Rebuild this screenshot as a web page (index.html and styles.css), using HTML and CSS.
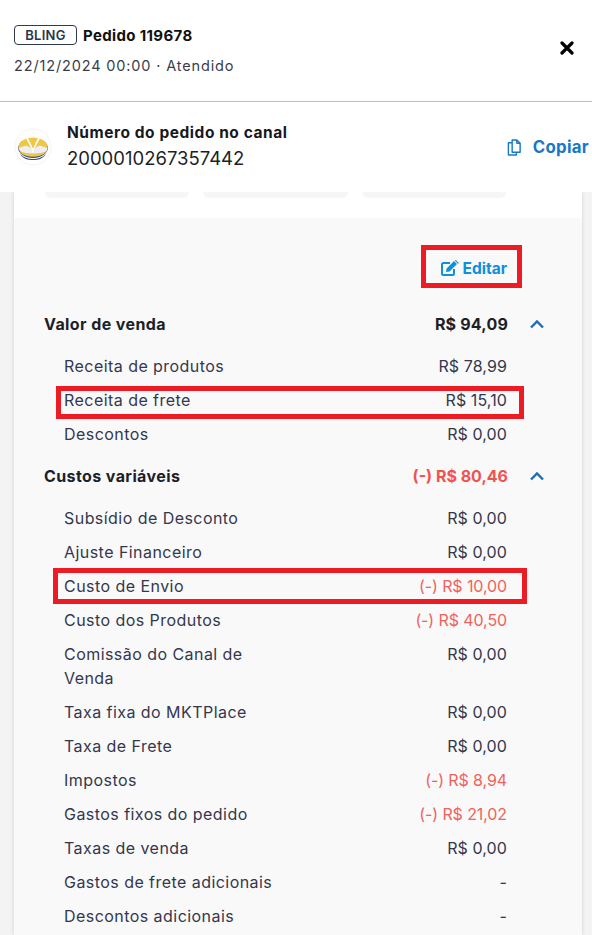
FILE: index.html
```
<!DOCTYPE html>
<html lang="pt-BR">
<head>
<meta charset="utf-8">
<title>Pedido 119678</title>
<link rel="stylesheet" href="styles.css">
</head>
<body>
<div class="drawer">
  <header class="head">
    <div class="head-text">
      <div class="title-line"><span class="badge">BLING</span><span class="title">Pedido 119678</span></div>
      <div class="subtitle">22/12/2024 00:00 · Atendido</div>
    </div>
    <svg class="close" viewBox="0 0 14 14" width="14" height="14"><path d="M2 2L12 12M12 2L2 12" stroke="#000" stroke-width="3.2" stroke-linecap="round" fill="none"/></svg>
  </header>
  <section class="channel">
    <svg class="logo" viewBox="0 0 38 38" width="38" height="38">
      <circle cx="19" cy="19" r="18" fill="#fff" stroke="#f3f3f3"/>
      <ellipse cx="19" cy="20" rx="14.800" ry="10" fill="#3b4a78"/>
      <ellipse cx="19" cy="19" rx="14.500" ry="9.600" fill="#eec844"/>
      <path d="M4.500 20l8-2.500 3.500 2 3 4.500 3-4.500 3.500-2 8 2.500-1 3.500c-6 2.500-20 2.500-26 0z" fill="#eceef3"/>
      <path d="M5.500 23c5 4.500 22 4.500 27 0c-1 3.500-7 5.500-13.500 5.500S6.500 26.500 5.500 23z" fill="#eec844"/>
      <path d="M13 10l3.500 7 2.500 6 2.500-6 3.500-7" fill="none" stroke="#fff" stroke-width="1.700"/>
      <path d="M6 26c4 4 9 5 13 5s9-1 13-5c-3 5-8 6-13 6s-10-1-13-6z" fill="#3b4a78"/>
    </svg>
    <div class="channel-text">
      <div class="channel-label">Número do pedido no canal</div>
      <div class="channel-number">2000010267357442</div>
    </div>
    <div class="copy">
      <svg viewBox="0 0 16 18" width="15" height="17" fill="none" stroke="#1877c9" stroke-width="1.500"><path d="M5.500 1h5l3.500 3.500V14H5.500z" stroke-linejoin="round"/><path d="M10.500 1v3.500H14" stroke-linejoin="round"/><path d="M5.500 4H1.500v13H10v-3" stroke-linejoin="round"/></svg>
      <span>Copiar</span>
    </div>
  </section>
  <div class="sheet">
    <div class="tabs"><span class="tab"></span><span class="tab"></span><span class="tab"></span></div>
    <div class="card">
      <div class="edit-row">
        <div class="edit">
          <svg viewBox="0 0 18 16" width="18" height="16"><path d="M13 9v4.500a1.500 1.500 0 0 1-1.500 1.500h-9A1.500 1.500 0 0 1 1 13.500v-9A1.500 1.500 0 0 1 2.500 3H9" fill="none" stroke="#0f8fdc" stroke-width="2"/><path d="M5 12l.6-3.600 7.400-7.400 3 3-7.400 7.400zM13.800.4l1-.4 3 3-.6 1z" fill="#0f8fdc"/></svg>
          <span>Editar</span>
        </div>
        <div class="mark mark-edit"></div>
      </div>

      <div class="row section"><span>Valor de venda</span><span class="val">R$ 94,09</span><svg class="chev" viewBox="0 0 16 10" width="16" height="10"><path d="M2 8.500l6-6 6 6" fill="none" stroke="#1c6fb5" stroke-width="2.400"/></svg></div>
      <div class="row item"><span>Receita de produtos</span><span class="val">R$ 78,99</span></div>
      <div class="row item marked"><span>Receita de frete</span><span class="val">R$ 15,10</span><div class="mark mark-frete"></div></div>
      <div class="row item"><span>Descontos</span><span class="val">R$ 0,00</span></div>

      <div class="row section second"><span>Custos variáveis</span><span class="val neg">(-) R$ 80,46</span><svg class="chev" viewBox="0 0 16 10" width="16" height="10"><path d="M2 8.500l6-6 6 6" fill="none" stroke="#1c6fb5" stroke-width="2.400"/></svg></div>
      <div class="row item"><span>Subsídio de Desconto</span><span class="val">R$ 0,00</span></div>
      <div class="row item"><span>Ajuste Financeiro</span><span class="val">R$ 0,00</span></div>
      <div class="row item marked"><span>Custo de Envio</span><span class="val neg">(-) R$ 10,00</span><div class="mark mark-envio"></div></div>
      <div class="row item"><span>Custo dos Produtos</span><span class="val neg">(-) R$ 40,50</span></div>
      <div class="row item tall"><span class="wrap">Comissão do Canal de Venda</span><span class="val">R$ 0,00</span></div>
      <div class="row item"><span>Taxa fixa do MKTPlace</span><span class="val">R$ 0,00</span></div>
      <div class="row item"><span>Taxa de Frete</span><span class="val">R$ 0,00</span></div>
      <div class="row item"><span>Impostos</span><span class="val neg">(-) R$ 8,94</span></div>
      <div class="row item"><span>Gastos fixos do pedido</span><span class="val neg">(-) R$ 21,02</span></div>
      <div class="row item"><span>Taxas de venda</span><span class="val">R$ 0,00</span></div>
      <div class="row item"><span>Gastos de frete adicionais</span><span class="val">-</span></div>
      <div class="row item"><span>Descontos adicionais</span><span class="val">-</span></div>
    </div>
  </div>
</div>
</body>
</html>
```
FILE: styles.css
```
* { box-sizing: border-box; }
html, body { margin: 0; height: 100%; }
body { overflow: hidden; background: #f3f3f3; font-family: "Inter", "Liberation Sans", sans-serif; color: #2b2e3f; }
.drawer { width: 592px; height: 935px; display: flex; flex-direction: column; overflow: hidden; }
.head { height: 102px; background: #fff; border-bottom: 1px solid #bdbdbd; display: flex; align-items: flex-start; justify-content: space-between; padding: 25px 18px 0 14px; flex: none; }
.title-line { display: flex; align-items: center; gap: 6px; height: 20px; }
.badge { width: 63px; height: 20px; border: 1px solid #2e3a4e; border-radius: 4px; font-size: 13px; font-weight: 600; letter-spacing: .3px; color: #2b3548; display: flex; align-items: center; justify-content: center; }
.title { font-size: 15px; font-weight: 700; letter-spacing: .35px; color: #111; }
.subtitle { margin-top: 10px; font-size: 14.500px; color: #3a3d4a; letter-spacing: .85px; line-height: 22px; }
.close { margin-top: 16px; }
.channel { height: 90px; background: #fff; display: flex; align-items: center; padding: 0 3px 0 14px; flex: none; position: relative; z-index: 1; }
.logo { flex: none; }
.channel-text { margin-left: 15px; flex: 1; }
.channel-label { font-size: 15.500px; font-weight: 700; letter-spacing: .55px; color: #16181f; line-height: 20px; margin-top: -1px; }
.channel-number { font-size: 18.500px; color: #1d1f28; line-height: 26px; margin-top: 2px; }
.copy { display: flex; align-items: center; gap: 11px; color: #1877c9; font-size: 16.800px; font-weight: 700; letter-spacing: .3px; }
.copy svg { flex: none; }
.sheet { margin: 0 10px 0 14px; background: #fff; flex: 1; box-shadow: 0 0 4px rgba(0,0,0,.14); min-height: 0; }
.tabs { display: flex; gap: 14px; padding: 0 76px 0 31px; height: 26px; }
.tab { flex: 1; height: 6px; background: #f6f6f6; border-radius: 0 0 10px 10px; }
.card { background: #f9f9f9; padding: 0 30px; height: 800px; }
.edit-row { height: 89px; position: relative; display: flex; justify-content: flex-end; padding-top: 40px; margin: 0 -30px; padding-right: 75px; }
.edit { display: flex; align-items: center; gap: 4px; height: 20px; color: #0f8fdc; font-size: 15.500px; font-weight: 700; }
.row { position: relative; display: flex; align-items: center; justify-content: space-between; }
.section { height: 34px; margin-bottom: 8px; font-size: 16px; font-weight: 700; letter-spacing: .4px; color: #1d1f28; }
.section .val { margin-left: auto; letter-spacing: .2px; color: #1d1f28; }
.section .val.neg { letter-spacing: 0; color: #f0534f; }
.chev { margin-left: 21px; margin-right: 7px; }
.second { margin-top: 8px; }
.item { height: 34px; padding: 0 45px 0 20px; font-size: 16px; letter-spacing: .45px; color: #34374d; }
.item .val { color: #34374d; letter-spacing: .1px; }
.item .val.neg { color: #f0625c; letter-spacing: -.1px; }
.tall { height: 58px; align-items: flex-start; padding-top: 5px; line-height: 24px; }
.wrap { width: 215px; }
.mark { position: absolute; border: 5px solid #ed1c24; pointer-events: none; }
.mark-edit { left: 407px; top: 27px; width: 101px; height: 43px; }
.mark-frete { left: 12px; right: 28px; top: 3px; height: 33px; }
.mark-envio { left: 9px; right: 25px; top: -1px; height: 36px; }
```
